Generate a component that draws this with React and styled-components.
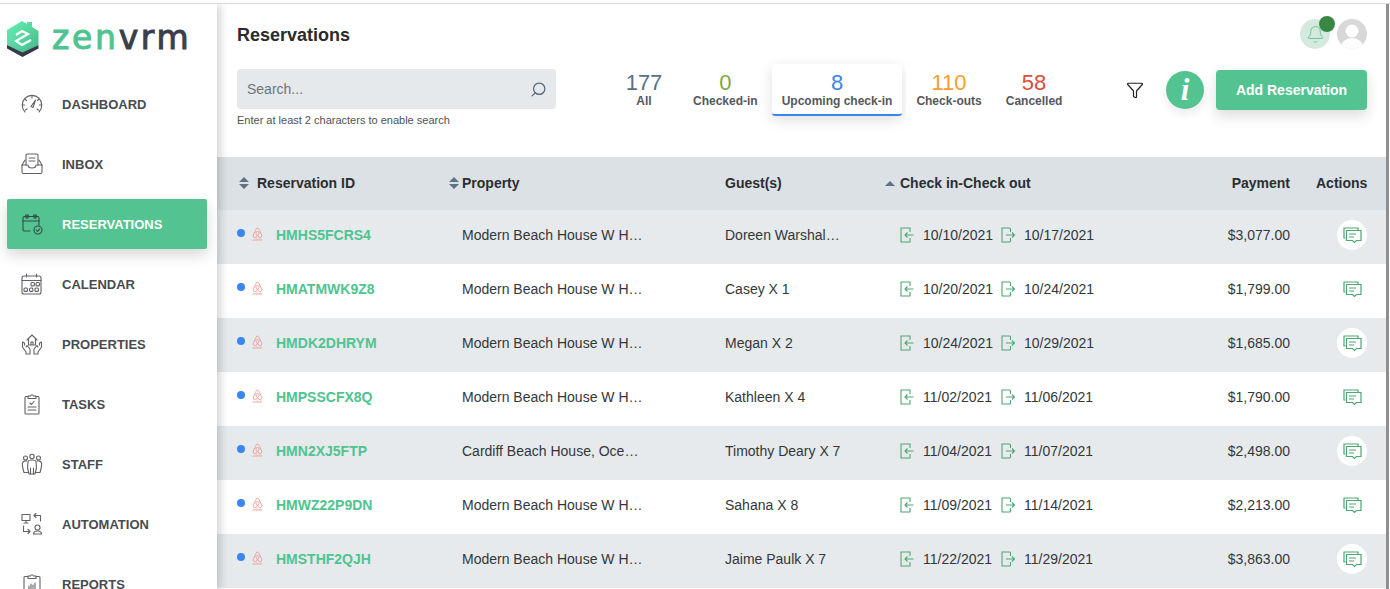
import React from "react";
import styled, { createGlobalStyle } from "styled-components";
import { Bell, Filter, Search } from "lucide-react";

const GREEN = "#53c391";

const GlobalStyle = createGlobalStyle`
  html, body {
    margin: 0;
    padding: 0;
    height: 100%;
    overflow: hidden;
    background: #fff;
    font-family: "Liberation Sans", Arial, sans-serif;
  }
`;

const Page = styled.div`
  width: 1390px;
  height: 589px;
  display: flex;
  overflow: hidden;
  box-sizing: border-box;
  margin-top: 3px;
  border-top: 1px solid #d9d9d9;
`;

const Sidebar = styled.aside`
  width: 217px;
  flex: none;
  background: #fff;
  box-shadow: 2px 0 10px rgba(0, 0, 0, 0.22);
  position: relative;
  z-index: 2;
  overflow: hidden;
`;

const LogoBox = styled.div`
  display: flex;
  align-items: center;
  height: 70px;
  padding-left: 7px;
  gap: 13px;
`;

const LogoText = styled.div`
  font-family: "DejaVu Sans", sans-serif;
  font-size: 33px;
  line-height: 70px;
  letter-spacing: 2.7px;
  -webkit-text-stroke: 1px currentColor;
  color: #4fc490;
  margin-top: -2px;
  span {
    color: #3a3f4b;
  }
`;

const Nav = styled.nav`
  display: flex;
  flex-direction: column;
`;

const NavItem = styled.div`
  height: 50px;
  margin: 5px 10px 5px 7px;
  padding-left: 14px;
  display: flex;
  align-items: center;
  border-radius: 2px;
  font-size: 13px;
  font-weight: 700;
  color: ${(p) => (p.$active ? "#fff" : "#484b50")};
  background: ${(p) => (p.$active ? GREEN : "transparent")};
  box-shadow: ${(p) => (p.$active ? "0 6px 14px rgba(0,0,0,.16)" : "none")};
  svg {
    width: 22px;
    height: 22px;
    flex: none;
    margin-right: 19px;
    color: ${(p) => (p.$active ? "#3a4a48" : "#5f6266")};
  }
`;

const Main = styled.main`
  flex: 1;
  min-width: 0;
  display: flex;
  flex-direction: column;
  margin-right: 1px;
  border-right: 3px solid #8f8f8f;
`;

const Header = styled.header`
  height: 153px;
  flex: none;
  padding: 15px 19px 0 20px;
  box-sizing: border-box;
`;

const TopRow = styled.div`
  display: flex;
  justify-content: space-between;
  align-items: flex-start;
  height: 50px;
`;

const Title = styled.h1`
  margin: 4px 0 0;
  font-size: 18px;
  line-height: 24px;
  font-weight: 700;
  color: #2b2b2b;
`;

const UserBox = styled.div`
  display: flex;
  gap: 7px;
`;

const BellCircle = styled.div`
  width: 30px;
  height: 30px;
  border-radius: 50%;
  background: #d5e9de;
  color: ${GREEN};
  display: flex;
  align-items: center;
  justify-content: center;
  position: relative;
`;

const BellDot = styled.span`
  position: absolute;
  top: -3px;
  right: -5px;
  width: 16px;
  height: 16px;
  border-radius: 50%;
  background: #3a8745;
`;

const Avatar = styled.div`
  width: 30px;
  height: 30px;
  border-radius: 50%;
  overflow: hidden;
  background: #d8d8d8;
  svg {
    display: block;
  }
`;

const ToolRow = styled.div`
  display: flex;
  align-items: flex-start;
`;

const SearchCol = styled.div`
  width: 319px;
  flex: none;
`;

const SearchBox = styled.div`
  height: 40px;
  border-radius: 4px;
  background: #e6e9ec;
  padding: 0 9px 0 10px;
  display: flex;
  align-items: center;
  justify-content: space-between;
  font-size: 14px;
  color: #6c757d;
  svg {
    color: #4f6577;
    transform: scaleX(-1);
  }
`;

const Hint = styled.div`
  margin-top: 5px;
  font-size: 11px;
  line-height: 13px;
  color: #4e5256;
`;

const Tabs = styled.div`
  display: flex;
  gap: 4px;
  margin: -5px 0 0 53px;
`;

const Tab = styled.div`
  min-width: 70px;
  height: 52px;
  box-sizing: border-box;
  padding: 7px 10px 0;
  display: flex;
  flex-direction: column;
  align-items: center;
  border-radius: 3px;
  background: #fff;
  box-shadow: ${(p) => (p.$active ? "0 4px 14px rgba(0,0,0,.13)" : "none")};
  border-bottom: 2px solid ${(p) => (p.$active ? "#3b86ee" : "transparent")};
`;

const TabCount = styled.div`
  font-size: 22px;
  line-height: 24px;
  color: ${(p) => p.$color};
`;

const TabLabel = styled.div`
  margin-top: -1px;
  font-size: 12px;
  line-height: 14px;
  font-weight: 700;
  color: #55585c;
  white-space: nowrap;
`;

const Actions = styled.div`
  margin: 1px 0 0 auto;
  display: flex;
  align-items: center;
  height: 40px;
  svg {
    color: #222;
  }
`;

const InfoButton = styled.div`
  width: 38px;
  height: 38px;
  margin: 0 12px 0 22px;
  border-radius: 50%;
  background: ${GREEN};
  color: #fff;
  box-shadow: 0 5px 10px rgba(0, 0, 0, 0.08);
  display: flex;
  align-items: center;
  justify-content: center;
  font-family: "Liberation Serif", serif;
  font-style: italic;
  font-weight: 700;
  font-size: 31px;
  line-height: 38px;
`;

const AddButton = styled.div`
  width: 151px;
  height: 40px;
  border-radius: 4px;
  background: ${GREEN};
  color: #fff;
  box-shadow: 0 6px 14px rgba(0, 0, 0, 0.14);
  display: flex;
  align-items: center;
  justify-content: center;
  font-size: 14px;
  font-weight: 700;
`;

const COLUMNS = "212px 276px 160px 285px 120px 1fr";

const HeadRow = styled.div`
  height: 53px;
  flex: none;
  display: grid;
  grid-template-columns: ${COLUMNS};
  padding-left: 20px;
  align-items: center;
  background: #dbe1e4;
  font-size: 14px;
  font-weight: 700;
  color: #2b2e31;
`;

const HeadCell = styled.div`
  display: flex;
  align-items: center;
  justify-content: ${(p) => (p.$right ? "flex-end" : "flex-start")};
  gap: ${(p) => p.$gap || 0}px;
  padding-left: ${(p) => p.$left || 0}px;
  margin-top: -1px;
  white-space: nowrap;
`;

const Row = styled.div`
  height: 54px;
  flex: none;
  box-sizing: border-box;
  padding: 0 0 4px 20px;
  display: grid;
  grid-template-columns: ${COLUMNS};
  align-items: center;
  background: ${(p) => (p.$shaded ? "#e6eaec" : "#fff")};
  font-size: 14px;
  color: #33373a;
`;

const IdCell = styled.div`
  display: flex;
  align-items: center;
`;

const StatusDot = styled.span`
  width: 8px;
  height: 8px;
  border-radius: 50%;
  background: #3b86ee;
  margin: -5px 6px 0 0;
`;

const ResId = styled.span`
  margin-left: 12px;
  font-weight: 700;
  color: #4fc490;
`;

const Property = styled.div`
  margin-left: 13px;
  white-space: nowrap;
`;

const Guest = styled.div`
  white-space: nowrap;
`;

const DateCell = styled.div`
  display: flex;
  align-items: center;
  padding-left: 15px;
`;

const DateText = styled.span`
  width: 69px;
  margin: 0 9px;
  white-space: nowrap;
`;

const Payment = styled.div`
  text-align: right;
`;

const ActionCell = styled.div`
  display: flex;
  justify-content: flex-end;
  padding-right: 19px;
`;

const ChatCircle = styled.div`
  width: 30px;
  height: 30px;
  border-radius: 50%;
  background: #fff;
  display: flex;
  align-items: center;
  justify-content: center;
`;

function Logo() {
  return (
    <svg width="32" height="36" viewBox="0 0 32 36">
      <defs>
        <linearGradient id="lg" x1="0" y1="0" x2="1" y2="1">
          <stop offset="0" stopColor="#66f0b4" />
          <stop offset="1" stopColor="#45b98c" />
        </linearGradient>
      </defs>
      <path d="M0 9 L15 0 L20 3 V1 H25 V6 L31.500 10 V24 L15.500 32 L0 24 Z" fill="url(#lg)" />
      <path d="M9 14 L15 10 L21 13 L9 20 L15 24 L24 19" fill="none" stroke="#fff" strokeWidth="2.200" />
      <path d="M0 24 L15.500 31.500 L31.500 24 V27.500 L15.500 36 L0 27.500 Z" fill="#353a47" />
    </svg>
  );
}

const line = { fill: "none", stroke: "currentColor", strokeWidth: 1.1, strokeLinecap: "round", strokeLinejoin: "round" };

function Gauge() {
  return (
    <svg viewBox="0 0 22 22" {...line}>
      <path d="M4 19 A9.8 9.8 0 1 1 18 19" />
      <path d="M11 3v2M4 6l1.5 1.5M18 6l-1.5 1.5M1.5 12h2M18.500 12h2M4.500 17l1.500-1M17.500 17l-1.500-1" />
      <path d="M10 13.500 L14.500 7 L12 14.500 Z" />
    </svg>
  );
}

function Inbox() {
  return (
    <svg viewBox="0 0 22 22" {...line}>
      <path d="M1 12 L4 7 M21 12 L18 7" />
      <path d="M5 12 V2.500 Q5 1 6.500 1 H15.500 Q17 1 17 2.500 V12" />
      <path d="M8 5h6M8 8h6" />
      <path d="M1 12 H7 Q7 15 11 15 Q15 15 15 12 H21 V19 Q21 20.500 19.500 20.500 H2.500 Q1 20.500 1 19 Z" />
    </svg>
  );
}

function CalendarCheck() {
  return (
    <svg viewBox="0 0 22 22" {...line}>
      <path d="M9 18 H3 Q2 18 2 16 V5 Q2 3.500 3.500 3.500 H16.500 Q18 3.500 18 5 V12" />
      <path d="M2 8 H18" />
      <circle cx="6" cy="3.500" r="1.600" />
      <circle cx="14" cy="3.500" r="1.600" />
      <circle cx="17" cy="17" r="4" />
      <path d="M15.300 17 L16.500 18.300 L18.800 15.800" />
    </svg>
  );
}

function Calendar() {
  return (
    <svg viewBox="0 0 22 22" {...line}>
      <rect x="1" y="3" width="19" height="18" rx="2" />
      <path d="M1 7.500 H20M5.500 1 V4M15.500 1 V4" />
      <rect x="10" y="9.500" width="3.400" height="3.400" rx="1" />
      <rect x="15" y="9.500" width="3.400" height="3.400" rx="1" />
      <rect x="3" y="15" width="3.400" height="3.400" rx="1" />
      <rect x="8.500" y="15" width="3.400" height="3.400" rx="1" />
      <rect x="14" y="15" width="3.400" height="3.400" rx="1" />
    </svg>
  );
}

function Properties() {
  return (
    <svg viewBox="0 0 22 22" {...line}>
      <path d="M6 7 L11 2 L16 7 M7.500 6 V12 H14.500 V6 M10 12 V9 H12 V12" />
      <path d="M1.500 9 V14 L5 19 V21 H9 V16 L6 12.500 L5 14 M1.500 9 L3.500 10 V12" />
      <path d="M20.500 9 V14 L17 19 V21 H13 V16 L16 12.500 L17 14 M20.500 9 L18.500 10 V12" />
    </svg>
  );
}

function Tasks() {
  return (
    <svg viewBox="0 0 22 22" {...line}>
      <path d="M7 3.500 H5 Q4 3.500 4 4.500 V20 Q4 21 5 21 H17 Q18 21 18 20 V4.500 Q18 3.500 17 3.500 H15" />
      <path d="M7 5.500 V3 H9.500 Q11 0.500 12.500 3 H15 V5.500 Z" />
      <path d="M9 10 L10.500 11.500 L13 8.500M7 14 H15M7 17 H15" />
    </svg>
  );
}

function Staff() {
  return (
    <svg viewBox="0 0 22 22" {...line}>
      <circle cx="4.500" cy="5" r="2" />
      <circle cx="11" cy="3.500" r="2.200" />
      <circle cx="17.500" cy="5" r="2" />
      <path d="M7 19.500 H3 Q1 13 1.500 10 Q2 8 4.500 8 H6" />
      <path d="M15 19.500 H19 Q21 13 20.500 10 Q20 8 17.500 8 H16" />
      <path d="M7 9 Q7 7 11 7 Q15 7 15 9 L15.500 15 L14 21 H8 L6.500 15 Z" />
      <path d="M9.500 15 V21 M12.500 15 V21" />
    </svg>
  );
}

function Automation() {
  return (
    <svg viewBox="0 0 22 22" {...line}>
      <rect x="1" y="1.500" width="8" height="6" />
      <path d="M5 7.500 V10 M3 10 H7" />
      <path d="M19.500 8 V2.500 H13 M15 0.500 L13 2.500 L15 4.500" />
      <path d="M2.500 13 V18.500 H9 M7 16.500 L9 18.500 L7 20.500" />
      <circle cx="16.500" cy="14.500" r="2.500" />
      <path d="M12.500 21 Q12.500 18 16.500 18 Q20.500 18 20.500 21 Z" />
    </svg>
  );
}

function Reports() {
  return (
    <svg viewBox="0 0 22 22" {...line}>
      <path d="M7 3.500 H4 Q3 3.500 3 4.500 V20 Q3 21 4 21 H18 Q19 21 19 20 V4.500 Q19 3.500 18 3.500 H15" />
      <path d="M7 5.500 V3 H9.500 Q11 0.500 12.500 3 H15 V5.500 Z" />
      <path d="M7 17 H15M8 16 V13M10 16 V11M12 16 V12M14 16 V10" />
    </svg>
  );
}

function SortArrows() {
  return (
    <svg width="10" height="12" viewBox="0 0 10 12" fill="#5d7285">
      <path d="M5 0 L10 5 H0 Z M0 7 H10 L5 12 Z" />
    </svg>
  );
}

function SortUp() {
  return (
    <svg width="10" height="5" viewBox="0 0 10 5" fill="#5d7285">
      <path d="M5 0 L10 5 H0 Z" />
    </svg>
  );
}

function Airbnb() {
  return (
    <svg width="13" height="14" viewBox="0 0 13 14" fill="none" stroke="#ef8b85" strokeWidth="0.8" style={{ marginTop: -2 }}>
      <path d="M6.500 1 C5.500 1 5.200 2 4.500 3.500 L2.500 7.500 C1.500 9.500 3 11 4.500 10.500 C5.500 10.200 6.500 9 7.500 7.500 C8.500 6 8 4.500 6.500 4.500 C5 4.500 4.500 6 5.500 7.500 C6.500 9 7.500 10.200 8.500 10.500 C10 11 11.500 9.500 10.500 7.500 L8.500 3.500 C7.800 2 7.500 1 6.500 1 Z" />
      <text x="6.500" y="13.700" fontSize="3.400" textAnchor="middle" fill="#ef8b85" stroke="none" fontFamily="Liberation Sans">airbnb</text>
    </svg>
  );
}

function CheckIn() {
  return (
    <svg width="14" height="16" viewBox="0 0 14 16" fill="none" stroke="#4fa673" strokeWidth="1.1" style={{ flex: "none" }}>
      <path d="M10 5 V1 H1 V15 H10 V11" />
      <path d="M13.500 8 H5 M7.500 5.500 L5 8 L7.500 10.500" />
    </svg>
  );
}

function CheckOut() {
  return (
    <svg width="14" height="16" viewBox="0 0 14 16" fill="none" stroke="#4fa673" strokeWidth="1.1" style={{ flex: "none" }}>
      <path d="M9.500 5 L9.500 2 Q9.500 1 8.500 1 H1 V15 H8.500 Q9.500 15 9.500 14 V11" />
      <path d="M5 8 H13.500 M11 5.500 L13.500 8 L11 10.500" />
    </svg>
  );
}

function Chat() {
  return (
    <svg width="19" height="17" viewBox="0 0 19 17" fill="none" stroke="#4fa673" strokeWidth="1.200">
      <path d="M2.500 11 H1 V1 H15 V3" />
      <path d="M3.500 3.500 H18 V13.500 H13.500 L11.500 15.500 L9.500 13.500 H3.500 Z" />
      <path d="M6 7 H13M6 10 H11" />
    </svg>
  );
}

const navItems = [
  ["DASHBOARD", Gauge],
  ["INBOX", Inbox],
  ["RESERVATIONS", CalendarCheck, true],
  ["CALENDAR", Calendar],
  ["PROPERTIES", Properties],
  ["TASKS", Tasks],
  ["STAFF", Staff],
  ["AUTOMATION", Automation],
  ["REPORTS", Reports],
];

const tabs = [
  ["177", "All", "#5a7184"],
  ["0", "Checked-in", "#7cab3f"],
  ["8", "Upcoming check-in", "#3b86ee", true],
  ["110", "Check-outs", "#f5a02c"],
  ["58", "Cancelled", "#e04b3a"],
];

const rows = [
  ["HMHS5FCRS4", "Modern Beach House W H…", "Doreen Warshal…", "10/10/2021", "10/17/2021", "$3,077.00"],
  ["HMATMWK9Z8", "Modern Beach House W H…", "Casey X 1", "10/20/2021", "10/24/2021", "$1,799.00"],
  ["HMDK2DHRYM", "Modern Beach House W H…", "Megan X 2", "10/24/2021", "10/29/2021", "$1,685.00"],
  ["HMPSSCFX8Q", "Modern Beach House W H…", "Kathleen X 4", "11/02/2021", "11/06/2021", "$1,790.00"],
  ["HMN2XJ5FTP", "Cardiff Beach House, Oce…", "Timothy Deary X 7", "11/04/2021", "11/07/2021", "$2,498.00"],
  ["HMWZ22P9DN", "Modern Beach House W H…", "Sahana X 8", "11/09/2021", "11/14/2021", "$2,213.00"],
  ["HMSTHF2QJH", "Modern Beach House W H…", "Jaime Paulk X 7", "11/22/2021", "11/29/2021", "$3,863.00"],
];

export default function App() {
  return (
    <Page>
      <GlobalStyle />
      <Sidebar>
        <LogoBox>
          <Logo />
          <LogoText>
            zen<span>vrm</span>
          </LogoText>
        </LogoBox>
        <Nav>
          {navItems.map(([label, Icon, active]) => (
            <NavItem key={label} $active={active}>
              <Icon />
              {label}
            </NavItem>
          ))}
        </Nav>
      </Sidebar>
      <Main>
        <Header>
          <TopRow>
            <Title>Reservations</Title>
            <UserBox>
              <BellCircle>
                <Bell size={19} strokeWidth={1.1} />
                <BellDot />
              </BellCircle>
              <Avatar>
                <svg width="30" height="30" viewBox="0 0 30 30" fill="#fff">
                  <circle cx="15" cy="12" r="6.500" />
                  <ellipse cx="15" cy="28" rx="11" ry="9" />
                </svg>
              </Avatar>
            </UserBox>
          </TopRow>
          <ToolRow>
            <SearchCol>
              <SearchBox>
                Search...
                <Search size={17} strokeWidth={1.7} />
              </SearchBox>
              <Hint>Enter at least 2 characters to enable search</Hint>
            </SearchCol>
            <Tabs>
              {tabs.map(([count, label, color, active]) => (
                <Tab key={label} $active={active}>
                  <TabCount $color={color}>{count}</TabCount>
                  <TabLabel>{label}</TabLabel>
                </Tab>
              ))}
            </Tabs>
            <Actions>
              <Filter size={18} strokeWidth={1.6} />
              <InfoButton>i</InfoButton>
              <AddButton>Add Reservation</AddButton>
            </Actions>
          </ToolRow>
        </Header>
        <HeadRow>
          <HeadCell $gap={8} $left={2}>
            <SortArrows />
            Reservation ID
          </HeadCell>
          <HeadCell $gap={3}>
            <SortArrows />
            Property
          </HeadCell>
          <HeadCell>Guest(s)</HeadCell>
          <HeadCell $gap={5}>
            <SortUp />
            Check in-Check out
          </HeadCell>
          <HeadCell $right>Payment</HeadCell>
          <HeadCell $left={26}>Actions</HeadCell>
        </HeadRow>
        {rows.map((r, i) => (
          <Row key={r[0]} $shaded={i % 2 === 0}>
            <IdCell>
              <StatusDot />
              <Airbnb />
              <ResId>{r[0]}</ResId>
            </IdCell>
            <Property>{r[1]}</Property>
            <Guest>{r[2]}</Guest>
            <DateCell>
              <CheckIn />
              <DateText>{r[3]}</DateText>
              <CheckOut />
              <DateText>{r[4]}</DateText>
            </DateCell>
            <Payment>{r[5]}</Payment>
            <ActionCell>
              <ChatCircle>
                <Chat />
              </ChatCircle>
            </ActionCell>
          </Row>
        ))}
      </Main>
    </Page>
  );
}
